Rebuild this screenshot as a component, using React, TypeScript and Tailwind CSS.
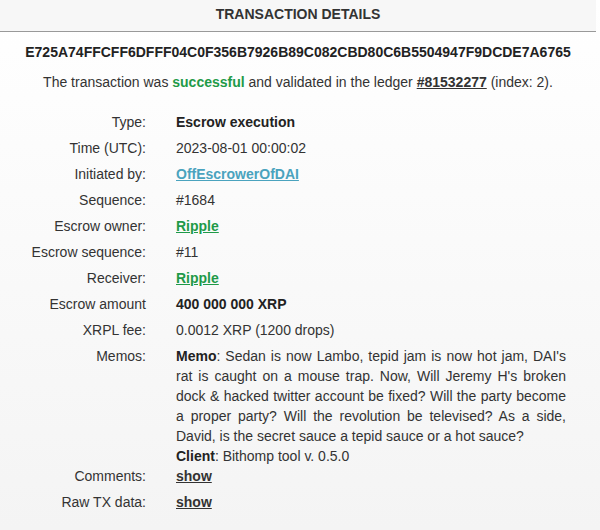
import type { ReactNode } from "react";

const HASH = "E725A74FFCFF6DFFF04C0F356B7926B89C082CBD80C6B5504947F9DCDE7A6765";

function Row({ label, children, last }: { label: string; children: ReactNode; last?: boolean }) {
  return (
    <div className={`flex ${last ? "pt-[3px] mb-[-3px]" : "py-[3px]"}`}>
      <div className="w-[146px] shrink-0 text-right">{label}</div>
      <div className="ml-[30px] w-[390px]">{children}</div>
    </div>
  );
}

function GreenLink({ children }: { children: ReactNode }) {
  return <a className="font-bold text-[#1f9a48] underline">{children}</a>;
}

function ShowLink() {
  return <a className="font-bold text-[#333] underline">show</a>;
}

export default function App() {
  return (
    <div
      className="min-h-[530px] w-[600px] bg-gradient-to-b from-white to-[#f4f4f4] text-[14px] leading-[20px] text-[#333]"
      style={{ fontFamily: '"Liberation Sans", Arial, sans-serif' }}
    >
      <div className="flex h-[32px] w-[596px] items-center justify-center border-b border-[#999] bg-[#f7f7f7] pb-[3px] font-bold">
        TRANSACTION DETAILS
      </div>

      <div className="w-[596px]">
        <div className="mt-[10px] text-center font-bold text-[#222]">{HASH}</div>

        <div className="mt-[10px] text-center">
          The transaction was <span className="font-bold text-[#1f9a48]">successful</span> and
          validated in the ledger <a className="font-bold underline">#81532277</a> (index: 2).
        </div>

        <div className="mt-[17px]">
          <Row label="Type:">
            <span className="font-bold text-[#222]">Escrow execution</span>
          </Row>
          <Row label="Time (UTC):">2023-08-01 00:00:02</Row>
          <Row label="Initiated by:">
            <a className="font-bold text-[#4aa3be] underline">OffEscrowerOfDAI</a>
          </Row>
          <Row label="Sequence:">#1684</Row>
          <Row label="Escrow owner:">
            <GreenLink>Ripple</GreenLink>
          </Row>
          <Row label="Escrow sequence:">#11</Row>
          <Row label="Receiver:">
            <GreenLink>Ripple</GreenLink>
          </Row>
          <Row label="Escrow amount">
            <span className="font-bold text-[#222]">400 000 000 XRP</span>
          </Row>
          <Row label="XRPL fee:">0.0012 XRP (1200 drops)</Row>
          <Row label="Memos:" last>
            <div className="text-justify">
              <b className="text-[#222]">Memo</b>: Sedan is now Lambo, tepid jam is now hot jam,
              DAI's rat is caught on a mouse trap. Now, Will Jeremy H's broken dock &amp; hacked
              twitter account be fixed? Will the party become a proper party? Will the revolution
              be televised? As a side, David, is the secret sauce a tepid sauce or a hot sauce?
            </div>
            <div>
              <b className="text-[#222]">Client</b>: Bithomp tool v. 0.5.0
            </div>
          </Row>
          <Row label="Comments:">
            <ShowLink />
          </Row>
          <Row label="Raw TX data:">
            <ShowLink />
          </Row>
        </div>
      </div>
    </div>
  );
}
